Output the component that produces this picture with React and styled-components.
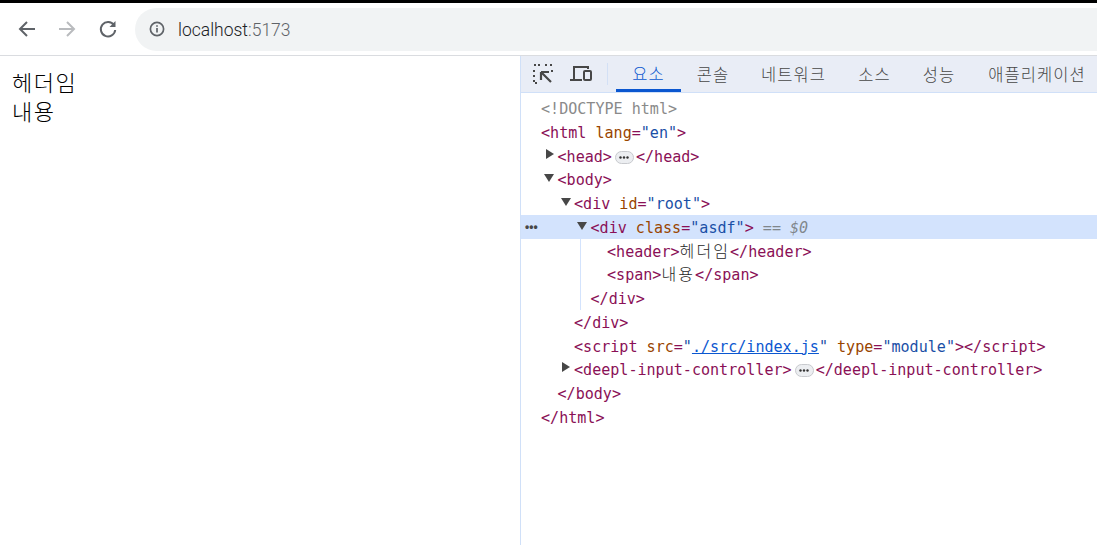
import React from 'react';
import styled, { createGlobalStyle } from 'styled-components';

const GlobalStyle = createGlobalStyle`
  html, body {
    margin: 0;
    height: 100%;
    background: #fff;
  }
  body {
    overflow: hidden;
    font-family: "Roboto", "Noto Sans CJK KR", sans-serif;
  }
`;

const Browser = styled.div`
  width: 1097px;
  height: 545px;
  display: flex;
  flex-direction: column;
  border-top: 3px solid #000;
  box-sizing: border-box;
`;

const Chrome = styled.div`
  height: 53px;
  flex: none;
  display: flex;
  align-items: center;
  padding-left: 15px;
  box-sizing: border-box;
  border-bottom: 1px solid #dadce0;
`;

const NavButton = styled.div`
  width: 24px;
  height: 24px;
  margin-right: 16px;
  display: flex;
  align-items: center;
  justify-content: center;
  color: ${p => (p.disabled ? '#b9bbbe' : '#5f6368')};
`;

const AddressBar = styled.div`
  flex: 1;
  height: 43px;
  padding-left: 14px;
  display: flex;
  align-items: center;
  gap: 13px;
  background: #f1f3f4;
  border-radius: 22px 0 0 22px;
`;

const Url = styled.span`
  font-family: "Roboto", sans-serif;
  font-size: 17.5px;
  font-weight: 300;
  padding-top: 2px;
  color: #202124;
  & > em {
    font-style: normal;
    color: #5f6368;
  }
`;

const Main = styled.div`
  flex: 1;
  display: flex;
  min-height: 0;
`;

const Page = styled.div`
  width: 520px;
  flex: none;
  padding: 11px 12px;
  box-sizing: border-box;
  font-family: "Noto Sans CJK KR", sans-serif;
  font-size: 22px;
  font-weight: 300;
  letter-spacing: 1.5px;
  line-height: 29px;
  color: #000;
  & > header { display: block; }
  & > span { display: block; }
`;

const DevTools = styled.div`
  flex: 1;
  min-width: 0;
  border-left: 1px solid #d0e0f8;
  display: flex;
  flex-direction: column;
`;

const TabBar = styled.div`
  height: 37px;
  flex: none;
  display: flex;
  align-items: stretch;
  padding-left: 3px;
  overflow: hidden;
  background: #e9edf6;
  border-bottom: 1px solid #d0e0f8;
  box-sizing: border-box;
`;

const ToolIcon = styled.div`
  flex: none;
  width: 38px;
  display: flex;
  align-items: center;
  justify-content: center;
  color: #474747;
`;

const ToolDivider = styled.div`
  flex: none;
  width: 1px;
  height: 22px;
  margin: 7px 8px 0 7px;
  background: #d3e0f5;
`;

const Tab = styled.div`
  flex: none;
  display: flex;
  align-items: center;
  justify-content: center;
  width: ${p => p.$w}px;
  height: 36px;
  font-family: "Noto Sans CJK KR", sans-serif;
  font-size: 16.5px;
  font-weight: 300;
  letter-spacing: 1.1px;
  color: ${p => (p.$active ? '#0b57d0' : '#474747')};
  border-bottom: ${p => (p.$active ? '3px solid #0b57d0' : '0')};
  box-sizing: border-box;
  white-space: nowrap;
`;

const Tree = styled.div`
  padding-top: 3px;
  font-family: "DejaVu Sans Mono", "Noto Sans CJK KR", monospace;
  font-size: 15.07px;
  white-space: pre;
`;

const Row = styled.div`
  position: relative;
  height: 23.78px;
  line-height: 26.6px;
  padding-left: ${p => 20 + p.$depth * 16.5}px;
  background: ${p => (p.$selected ? '#d3e3fd' : 'transparent')};
`;

const Guide = styled.div`
  position: absolute;
  top: 0;
  bottom: 0;
  left: 59px;
  width: 1px;
  background: #d3e3fd;
`;

const Tri = styled.span`
  position: absolute;
  left: ${p => 23 + (p.$depth - 1) * 16.5 + (p.$open ? 0 : 1.5)}px;
  top: ${p => (p.$open ? 7 : 5)}px;
  width: 0;
  height: 0;
  ${p =>
    p.$open
      ? 'border-left: 5px solid transparent; border-right: 5px solid transparent; border-top: 8px solid #474747;'
      : 'border-top: 5px solid transparent; border-bottom: 5px solid transparent; border-left: 8px solid #474747;'}
`;

const Dots = styled.span`
  position: absolute;
  left: 4px;
  top: -1px;
  font-family: "Liberation Sans", sans-serif;
  font-size: 12px;
  font-weight: 700;
  color: #474747;
`;

const Tag = styled.span`color: #8a1056;`;
const Attr = styled.span`color: #994500;`;
const Val = styled.span`color: #1a4fa6;`;
const Doc = styled.span`color: #8a8a8a;`;
const Link = styled.span`color: #0b57d0; text-decoration: underline;`;
const Note = styled.span`color: #80868b; font-style: italic;`;
const Ko = styled.span`
  color: #1f1f1f;
  font-family: "Noto Sans CJK KR", sans-serif;
  font-size: 16px;
  font-weight: 300;
  letter-spacing: 2.1px;
  line-height: 0;
`;

const Pill = styled.span`
  display: inline-flex;
  align-items: center;
  justify-content: center;
  width: 19px;
  height: 13px;
  margin: 0 2px 0 3px;
  vertical-align: 3px;
  background: #eceef1;
  border: 1px solid #c8cace;
  border-radius: 7px;
  box-sizing: border-box;
  & > svg { display: block; }
`;

const MoreDots = () => (
  <svg width="10" height="3" viewBox="0 0 10 3" fill="#333">
    <circle cx="1.5" cy="1.5" r="1.2" />
    <circle cx="5" cy="1.5" r="1.2" />
    <circle cx="8.5" cy="1.5" r="1.2" />
  </svg>
);

const Collapsed = () => (
  <Pill>
    <MoreDots />
  </Pill>
);

const ROWS = [
  { d: 0, c: <Doc>{'<!DOCTYPE html>'}</Doc> },
  { d: 0, c: <><Tag>{'<html '}</Tag><Attr>lang</Attr><Tag>=</Tag><Val>"en"</Val><Tag>{'>'}</Tag></> },
  { d: 1, tri: 'closed', c: <><Tag>{'<head>'}</Tag><Collapsed /><Tag>{'</head>'}</Tag></> },
  { d: 1, tri: 'open', c: <Tag>{'<body>'}</Tag> },
  { d: 2, tri: 'open', c: <><Tag>{'<div '}</Tag><Attr>id</Attr><Tag>=</Tag><Val>"root"</Val><Tag>{'>'}</Tag></> },
  { d: 3, tri: 'open', selected: true, c: <><Tag>{'<div '}</Tag><Attr>class</Attr><Tag>=</Tag><Val>"asdf"</Val><Tag>{'>'}</Tag><Note>{' == $0'}</Note></> },
  { d: 4, guide: true, c: <><Tag>{'<header>'}</Tag><Ko>헤더임</Ko><Tag>{'</header>'}</Tag></> },
  { d: 4, guide: true, c: <><Tag>{'<span>'}</Tag><Ko>내용</Ko><Tag>{'</span>'}</Tag></> },
  { d: 3, guide: true, c: <Tag>{'</div>'}</Tag> },
  { d: 2, c: <Tag>{'</div>'}</Tag> },
  { d: 2, c: <><Tag>{'<script '}</Tag><Attr>src</Attr><Tag>=</Tag><Val>"</Val><Link>./src/index.js</Link><Val>"</Val><Attr>{' type'}</Attr><Tag>=</Tag><Val>"module"</Val><Tag>{'></script>'}</Tag></> },
  { d: 2, tri: 'closed', c: <><Tag>{'<deepl-input-controller>'}</Tag><Collapsed /><Tag>{'</deepl-input-controller>'}</Tag></> },
  { d: 1, c: <Tag>{'</body>'}</Tag> },
  { d: 0, c: <Tag>{'</html>'}</Tag> },
];

const TABS = [
  { label: '요소', w: 65, active: true },
  { label: '콘솔', w: 64 },
  { label: '네트워크', w: 97 },
  { label: '소스', w: 65 },
  { label: '성능', w: 64 },
  { label: '애플리케이션', w: 132 },
];

export default function App() {
  return (
    <>
      <GlobalStyle />
      <Browser>
        <Chrome>
          <NavButton>
            <svg width="20" height="20" viewBox="0 0 20 20" fill="none" stroke="currentColor" strokeWidth="2">
              <path d="M18 10H3M10 3l-7 7 7 7" />
            </svg>
          </NavButton>
          <NavButton disabled>
            <svg width="20" height="20" viewBox="0 0 20 20" fill="none" stroke="currentColor" strokeWidth="2">
              <path d="M2 10h15M10 3l7 7-7 7" />
            </svg>
          </NavButton>
          <NavButton>
            <svg width="20" height="20" viewBox="0 0 20 20" fill="none" stroke="currentColor" strokeWidth="2" style={{ marginLeft: 2 }}>
              <path d="M16 6.2A7.2 7.2 0 1 0 17.2 11" />
              <path d="M17.5 2v6h-6z" fill="currentColor" stroke="none" />
            </svg>
          </NavButton>
          <AddressBar>
            <svg width="16" height="16" viewBox="0 0 16 16" fill="none" stroke="#5f6368" strokeWidth="1.7">
              <circle cx="8" cy="8" r="6.6" />
              <path d="M8 7v4.5" />
              <path d="M8 4.2v1.6" />
            </svg>
            <Url>localhost<em>:5173</em></Url>
          </AddressBar>
        </Chrome>
        <Main>
          <Page>
            <header>헤더임</header>
            <span>내용</span>
          </Page>
          <DevTools>
            <TabBar>
              <ToolIcon>
                <svg width="22" height="22" viewBox="0 0 22 22" fill="none" stroke="currentColor" strokeWidth="2">
                  <path d="M8 2H2v2M2 7v2M2 12v2M2 17v3h3M13 2h2M18 2h2v2M20 7v2" strokeDasharray="2 2" />
                  <path d="M9 9l10 10M9 9v8M9 9h8" strokeWidth="2.2" />
                </svg>
              </ToolIcon>
              <ToolIcon>
                <svg width="24" height="20" viewBox="0 0 24 20" fill="none" stroke="currentColor" strokeWidth="2">
                  <path d="M5 15V3h14v2" />
                  <path d="M1 16h12" />
                  <rect x="15" y="7" width="7" height="9" rx="1" />
                </svg>
              </ToolIcon>
              <ToolDivider />
              {TABS.map(t => (
                <Tab key={t.label} $w={t.w} $active={t.active}>{t.label}</Tab>
              ))}
            </TabBar>
            <Tree>
              {ROWS.map((r, i) => (
                <Row key={i} $depth={r.d} $selected={r.selected}>
                  {r.selected && <Dots>•••</Dots>}
                  {r.guide && <Guide />}
                  {r.tri && <Tri $depth={r.d} $open={r.tri === 'open'} />}
                  {r.c}
                </Row>
              ))}
            </Tree>
          </DevTools>
        </Main>
      </Browser>
    </>
  );
}
